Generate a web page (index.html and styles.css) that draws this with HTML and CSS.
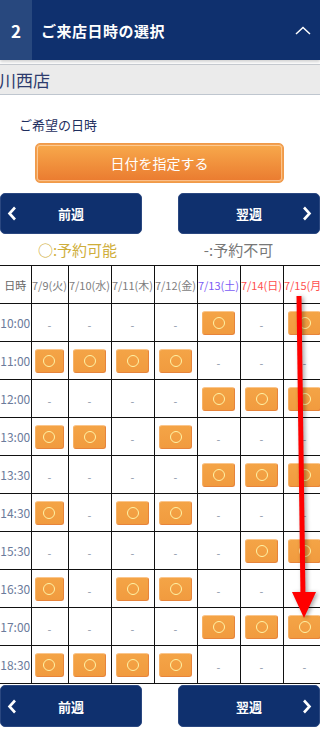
FILE: index.html
```html
<!DOCTYPE html>
<html lang="ja">
<head>
<meta charset="utf-8">
<title>ご来店日時の選択</title>
<link rel="stylesheet" href="styles.css">
</head>
<body>
<div class="page">
  <header class="step-head">
    <div class="step-num">2</div>
    <h2 class="step-title">ご来店日時の選択</h2>
    <svg class="step-toggle" width="16" height="9" viewBox="0 0 16 9"><polyline points="1,8 8,1.5 15,8" fill="none" stroke="#fff" stroke-width="1.5"/></svg>
  </header>
  <div class="shop-bar">川西店</div>
  <p class="label">ご希望の日時</p>
  <div class="date-row"><button class="date-btn">日付を指定する</button></div>

  <div class="week-nav">
    <a class="week-btn prev"><svg class="chev" width="10" height="15" viewBox="0 0 10 15"><polyline points="8,1.5 2.5,7.5 8,13.5" fill="none" stroke="#fff" stroke-width="2.6"/></svg><span>前週</span></a>
    <a class="week-btn next"><span>翌週</span><svg class="chev" width="10" height="15" viewBox="0 0 10 15"><polyline points="2,1.5 7.5,7.5 2,13.5" fill="none" stroke="#fff" stroke-width="2.6"/></svg></a>
  </div>

  <div class="legend">
    <span class="legend-ok">○:予約可能</span>
    <span class="legend-ng">-:予約不可</span>
  </div>

  <div class="table-wrap">
    <table class="cal">
      <colgroup><col class="c-time"><col class="c-narrow"><col class="c-day"><col class="c-day"><col class="c-day"><col class="c-day"><col class="c-day"><col class="c-day"></colgroup>
      <thead>
        <tr><th class="th-time">日時</th><th>7/9(火)</th><th>7/10(水)</th><th>7/11(木)</th><th>7/12(金)</th><th class="sat">7/13(土)</th><th class="sun">7/14(日)</th><th class="sun">7/15(月)</th></tr>
      </thead>
      <tbody>
        <tr><td class="time">10:00</td><td><span class="na">-</span></td><td><span class="na">-</span></td><td><span class="na">-</span></td><td><span class="na">-</span></td><td><span class="slot"><i></i></span></td><td><span class="na">-</span></td><td><span class="slot"><i></i></span></td></tr>
        <tr><td class="time">11:00</td><td><span class="slot"><i></i></span></td><td><span class="slot"><i></i></span></td><td><span class="slot"><i></i></span></td><td><span class="slot"><i></i></span></td><td><span class="na">-</span></td><td><span class="na">-</span></td><td><span class="na">-</span></td></tr>
        <tr><td class="time">12:00</td><td><span class="na">-</span></td><td><span class="na">-</span></td><td><span class="na">-</span></td><td><span class="na">-</span></td><td><span class="slot"><i></i></span></td><td><span class="slot"><i></i></span></td><td><span class="slot"><i></i></span></td></tr>
        <tr><td class="time">13:00</td><td><span class="slot"><i></i></span></td><td><span class="slot"><i></i></span></td><td><span class="na">-</span></td><td><span class="slot"><i></i></span></td><td><span class="na">-</span></td><td><span class="na">-</span></td><td><span class="na">-</span></td></tr>
        <tr><td class="time">13:30</td><td><span class="na">-</span></td><td><span class="na">-</span></td><td><span class="na">-</span></td><td><span class="na">-</span></td><td><span class="slot"><i></i></span></td><td><span class="slot"><i></i></span></td><td><span class="slot"><i></i></span></td></tr>
        <tr><td class="time">14:30</td><td><span class="slot"><i></i></span></td><td><span class="na">-</span></td><td><span class="slot"><i></i></span></td><td><span class="slot"><i></i></span></td><td><span class="na">-</span></td><td><span class="na">-</span></td><td><span class="na">-</span></td></tr>
        <tr><td class="time">15:30</td><td><span class="na">-</span></td><td><span class="na">-</span></td><td><span class="na">-</span></td><td><span class="na">-</span></td><td><span class="na">-</span></td><td><span class="slot"><i></i></span></td><td><span class="slot"><i></i></span></td></tr>
        <tr><td class="time">16:30</td><td><span class="slot"><i></i></span></td><td><span class="na">-</span></td><td><span class="slot"><i></i></span></td><td><span class="slot"><i></i></span></td><td><span class="na">-</span></td><td><span class="na">-</span></td><td><span class="na">-</span></td></tr>
        <tr><td class="time">17:00</td><td><span class="na">-</span></td><td><span class="na">-</span></td><td><span class="na">-</span></td><td><span class="na">-</span></td><td><span class="slot"><i></i></span></td><td><span class="slot"><i></i></span></td><td><span class="slot"><i></i></span></td></tr>
        <tr><td class="time">18:30</td><td><span class="slot"><i></i></span></td><td><span class="slot"><i></i></span></td><td><span class="slot"><i></i></span></td><td><span class="slot"><i></i></span></td><td><span class="na">-</span></td><td><span class="na">-</span></td><td><span class="na">-</span></td></tr>
      </tbody>
    </table>
  </div>

  <div class="week-nav bottom">
    <a class="week-btn prev"><svg class="chev" width="10" height="15" viewBox="0 0 10 15"><polyline points="8,1.5 2.5,7.5 8,13.5" fill="none" stroke="#fff" stroke-width="2.6"/></svg><span>前週</span></a>
    <a class="week-btn next"><span>翌週</span><svg class="chev" width="10" height="15" viewBox="0 0 10 15"><polyline points="2,1.5 7.5,7.5 2,13.5" fill="none" stroke="#fff" stroke-width="2.6"/></svg></a>
  </div>

  <svg class="arrow" width="320" height="730" viewBox="0 0 320 730">
    <line x1="299" y1="296" x2="303" y2="598" stroke="#ff0000" stroke-width="5"/>
    <polygon points="292,592 316,592 304,618" fill="#ff0000"/>
  </svg>
</div>
</body>
</html>
```

FILE: styles.css
```css
html, body {
  margin: 0;
  padding: 0;
  background: #fff;
}
body {
  font-family: "Noto Sans CJK JP", "Noto Sans", sans-serif;
  overflow: hidden;
}
.page {
  position: relative;
  width: 320px;
  height: 730px;
  overflow: hidden;
}
.step-head {
  display: flex;
  align-items: center;
  height: 60px;
  background: #0f306e;
  box-shadow: 0 2px 3px rgba(0, 0, 0, 0.18);
  position: relative;
  z-index: 1;
}
.step-num {
  width: 32px;
  height: 100%;
  background: #28487e;
  color: #fff;
  font-weight: 700;
  font-size: 17px;
  display: flex;
  align-items: center;
  justify-content: center;
}
.step-title {
  margin: 0 0 0 9px;
  color: #fff;
  font-size: 15px;
  font-weight: 700;
  letter-spacing: 0.5px;
}
.step-toggle {
  margin-left: auto;
  margin-right: 9px;
}
.shop-bar {
  margin-top: 4px;
  height: 29px;
  line-height: 29px;
  background: #ebebeb;
  border-top: 1px solid #c6cad0;
  border-bottom: 1px solid #bfc6cf;
  color: #2d3b6e;
  font-size: 17px;
  padding-left: 0;
  text-indent: -1px;
}
.label {
  margin: 20px 0 0 19px;
  font-size: 13px;
  line-height: 19px;
  color: #1e2e5e;
}
.date-row {
  display: flex;
  justify-content: center;
  margin-top: 9px;
  padding-right: 1px;
}
.date-btn {
  width: 249px;
  height: 40px;
  border: 1px solid #f09a4a;
  border-radius: 5px;
  background: linear-gradient(#f8aa4c, #ea7a2f);
  box-shadow: inset 0 0 0 1px #f2a050, inset 0 0 0 2px rgba(255, 214, 170, 0.75);
  color: #fff;
  font-family: inherit;
  font-size: 14px;
  padding: 0;
}
.week-nav {
  display: flex;
  justify-content: space-between;
  margin-top: 10px;
}
.week-nav.bottom {
  margin-top: 1px;
}
.week-btn {
  width: 142px;
  height: 41px;
  box-sizing: border-box;
  background: #0f306e;
  border: 1px solid #2a4780;
  border-radius: 5px;
  color: #fff;
  font-size: 13px;
  font-weight: 700;
  display: flex;
  align-items: center;
  position: relative;
}
.week-nav.bottom .week-btn {
  height: 42px;
}
.week-btn span {
  flex: 1;
  text-align: center;
}
.week-btn.prev .chev {
  margin-left: 6px;
}
.week-btn.prev span {
  margin-right: 16px;
}
.week-btn.next .chev {
  margin-right: 7px;
}
.week-btn.next span {
  margin-left: 17px;
}
.legend {
  display: flex;
  height: 31px;
  align-items: center;
  font-size: 15px;
}
.legend span {
  flex: 1;
  text-align: center;
}
.legend-ok {
  color: #cfae3a;
  padding-right: 6px;
}
.legend-ng {
  color: #777;
  padding-right: 4px;
}
.table-wrap {
  width: 320px;
  overflow: hidden;
}
.cal {
  border-collapse: collapse;
  table-layout: fixed;
  width: 326px;
  margin-left: 0;
}
.c-time { width: 31px; }
.c-narrow { width: 37px; }
.c-day { width: 43px; }
.cal th, .cal td {
  border: 1px solid #111;
  height: 37px;
  padding: 0;
  text-align: center;
  vertical-align: middle;
  white-space: nowrap;
  overflow: hidden;
}
.cal tr > :first-child {
  border-left: none;
}
.cal th {
  font-weight: 400;
  font-size: 11px;
  color: #7d7d7d;
}
.cal th.th-time {
  color: #666;
  font-size: 11px;
}
.cal th.sat { color: #7b5cf5; }
.cal th.sun { color: #ff4f4f; }
.cal td.time {
  font-size: 12px;
  color: #6b7b9b;
}
.na {
  font-size: 11px;
  color: #8a96a8;
}
.slot {
  display: flex;
  align-items: center;
  justify-content: center;
  width: 80%;
  height: 24px;
  margin: 0 auto;
  box-sizing: border-box;
  background: linear-gradient(#f4a446, #f19b3f);
  border: 1px solid #e7843b;
  border-top-color: #fbc68c;
  border-left-color: #f7b266;
  border-radius: 3px;
}
.slot i {
  display: block;
  width: 12px;
  height: 12px;
  box-sizing: border-box;
  border: 1.5px solid #fff3a6;
  border-radius: 50%;
}
.arrow {
  position: absolute;
  left: 0;
  top: 0;
  pointer-events: none;
  filter: drop-shadow(2px 1px 2px rgba(0, 0, 0, 0.35));
}
```
